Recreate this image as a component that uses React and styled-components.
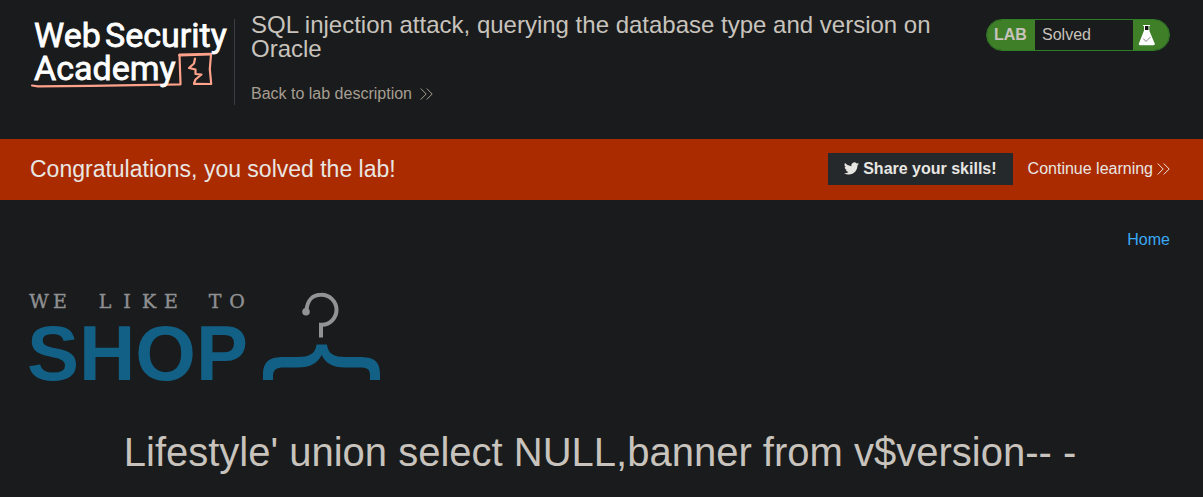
import React from "react";
import styled, { createGlobalStyle } from "styled-components";

const GlobalStyle = createGlobalStyle`
  * { box-sizing: border-box; }
  body {
    margin: 0;
    background: #191b1c;
    color: #c8c3bc;
    font-family: "Liberation Sans", Arial, sans-serif;
    font-size: 16px;
    line-height: 20px;
  }
`;

const Header = styled.header`
  display: flex;
  align-items: flex-start;
  padding: 19px 33px 34px 30px;
`;

const LogoLink = styled.a`
  flex: none;
  display: block;
  height: 86px;
  padding-right: 4px;
  border-right: 1px solid #3b3e40;
`;

const Drawing = styled.svg`
  display: block;
  flex: none;
  overflow: visible;
`;

const TitleBlock = styled.div`
  flex: 1;
  padding: 0 50px 0 16px;
  margin-top: -6px;
`;

const Title = styled.h2`
  margin: 0 0 23px;
  font-size: 24px;
  line-height: 24px;
  font-weight: 400;
`;

const ArrowLink = styled.a`
  display: inline-flex;
  align-items: center;
  gap: ${(p) => p.$gap}px;
  color: ${(p) => p.$color};
  text-decoration: none;
`;

const Badge = styled.div`
  flex: none;
  display: flex;
  width: 184px;
  height: 32px;
  border: 1px solid #2f7d27;
  border-radius: 16px;
  overflow: hidden;
  line-height: 30px;
`;

const BadgeLabel = styled.span`
  width: 48px;
  padding-left: 7px;
  background: #3f7f28;
  font-weight: 700;
`;

const BadgeState = styled.span`
  flex: 1;
  padding-left: 7px;
`;

const BadgeIcon = styled.span`
  width: 36px;
  padding: 5px 0 0 5px;
  background: #3f7f28;
`;

const Banner = styled.section`
  display: flex;
  align-items: center;
  min-height: 61px;
  padding: 0 33px 2px 30px;
  background: #ab2b00;
  color: #e8e6e3;
`;

const BannerText = styled.p`
  flex: 1;
  margin: 0;
  font-size: 23px;
  line-height: 28px;
`;

const ShareButton = styled.button`
  display: flex;
  align-items: center;
  gap: 4px;
  height: 32px;
  margin: 0 15px 0 0;
  padding: 0 16px;
  border: 0;
  background: #25292b;
  color: #e8e6e3;
  font: 700 16px/20px "Liberation Sans", Arial, sans-serif;
`;

const Main = styled.main`
  padding: 30px 33px 20px 30px;
`;

const Nav = styled.nav`
  display: flex;
  justify-content: flex-end;
`;

const NavLink = styled.a`
  color: #3ba9f6;
  text-decoration: none;
`;

const ShopHeader = styled.div`
  margin-top: 40px;
`;

const Query = styled.h1`
  margin: 46px 0 0;
  font-size: 40px;
  line-height: 48px;
  font-weight: 400;
  text-align: center;
`;

const DoubleChevron = () => (
  <Drawing width="13" height="12" viewBox="0 0 13 12" fill="none" stroke="currentColor" strokeWidth="1" aria-hidden="true">
    <path d="M0.7 0.5 6.2 6 0.7 11.5M6.7 0.5 12.2 6 6.7 11.5" />
  </Drawing>
);

const AcademyLogo = () => (
  <Drawing width="200" height="70" viewBox="30 19 200 70" role="img" aria-label="Web Security Academy">
    <g fill="none" stroke="#ffa28b" strokeLinejoin="round" strokeLinecap="round">
      <path d="M32 85.5 38 86.3 90 85.8 180.5 84.3 179.5 55" strokeWidth="2.2" />
      <path d="M179.5 55 211 54.2" strokeWidth="2.8" />
      <path d="M211 54.5 209.8 69 211.2 84 194 83.8" strokeWidth="2.2" />
      <path d="M195 58.5 194 63.5 189 68 195.5 69.5 195.5 74 201.5 74.5 195.5 79.5 194 83.5" strokeWidth="2.2" />
    </g>
    <g fill="#fff" stroke="#fff" strokeWidth="0.8" fontFamily="Roboto, sans-serif" fontSize="34">
      <text x="34" y="47">Web</text>
      <text x="105" y="47">Security</text>
      <text x="34" y="80">Academy</text>
    </g>
  </Drawing>
);

const Flask = () => (
  <Drawing width="18" height="21" viewBox="0 0 18 21" aria-hidden="true">
    <path d="M5 .5H12M6.5 1V6M10.8 1V6" stroke="#fff" strokeWidth="1" fill="none" />
    <path d="M7 1H10.3V5H7Z" fill="#10130f" />
    <path d="M6.2 5H11L16.6 18.2Q17.2 20.2 15.5 20.2H2Q.3 20.2 1 18.2Z" fill="#fff" />
    <path d="M5.2 13.5 8 16.5 12.5 12" stroke="#858585" strokeWidth="1" fill="none" />
  </Drawing>
);

const Bird = () => (
  <Drawing width="15" height="13" viewBox="0 2 24 20" fill="currentColor" aria-hidden="true">
    <path d="M23.95 4.57a10 10 0 0 1-2.82.77 4.96 4.96 0 0 0 2.16-2.72 9.9 9.9 0 0 1-3.13 1.2 4.92 4.92 0 0 0-8.38 4.48A13.93 13.93 0 0 1 1.64 3.16a4.92 4.92 0 0 0 1.52 6.57 4.9 4.9 0 0 1-2.23-.61v.06a4.92 4.92 0 0 0 3.95 4.83 5 5 0 0 1-2.21.08 4.94 4.94 0 0 0 4.6 3.42A9.87 9.87 0 0 1 0 19.54a13.94 13.94 0 0 0 7.55 2.21c9.05 0 14-7.5 14-13.98 0-.21 0-.42-.02-.63a9.94 9.94 0 0 0 2.42-2.57Z" />
  </Drawing>
);

const ShopLogo = () => (
  <Drawing width="352" height="92" viewBox="30 290 352 92" role="img" aria-label="We like to shop">
    <text
      x="39 60 83 105 127 149 171 193 215 237"
      y="308"
      textAnchor="middle"
      fill="#8f9092"
      stroke="#8f9092"
      strokeWidth="0.4"
      fontFamily='"DejaVu Serif", serif'
      fontSize="19"
    >
      WE LIKE TO
    </text>
    <text x="27" y="380" fill="#126086" fontFamily='"Liberation Sans", Arial, sans-serif' fontWeight="700" fontSize="78">
      SHOP
    </text>
    <path d="M306.5 311C307 300 313 294.8 321 294.8A15 15 0 0 1 322 324.8H321V337.5" fill="none" stroke="#929395" strokeWidth="4" />
    <circle cx="306" cy="311.8" r="3.8" fill="#929395" />
    <path
      d="M316.5 344.5H327C328 354 334 357 345 357H359C374 357 380 361 380 375V380H370V375C370 369 367 367.5 359 367.5H345C333 367.5 325 363 321.7 355C318 363 310 367.5 298 367.5H284C276 367.5 273 370 273 376V380H263V375C263 361 270 357 284 357H298C309 357 315.5 354 316.5 344.5Z"
      fill="#126086"
    />
  </Drawing>
);

export default function App() {
  return (
    <>
      <GlobalStyle />
      <Header>
        <LogoLink href="#academy">
          <AcademyLogo />
        </LogoLink>
        <TitleBlock>
          <Title>SQL injection attack, querying the database type and version on Oracle</Title>
          <ArrowLink href="#description" $gap={8} $color="#a69e92">
            Back to lab description
            <DoubleChevron />
          </ArrowLink>
        </TitleBlock>
        <Badge>
          <BadgeLabel>LAB</BadgeLabel>
          <BadgeState>Solved</BadgeState>
          <BadgeIcon>
            <Flask />
          </BadgeIcon>
        </Badge>
      </Header>
      <Banner>
        <BannerText>Congratulations, you solved the lab!</BannerText>
        <ShareButton type="button">
          <Bird />
          Share your skills!
        </ShareButton>
        <ArrowLink href="#continue" $gap={4} $color="#e8e6e3">
          Continue learning
          <DoubleChevron />
        </ArrowLink>
      </Banner>
      <Main>
        <Nav>
          <NavLink href="#home">Home</NavLink>
        </Nav>
        <ShopHeader>
          <ShopLogo />
        </ShopHeader>
        <Query>Lifestyle' union select NULL,banner from v$version-- -</Query>
      </Main>
    </>
  );
}
